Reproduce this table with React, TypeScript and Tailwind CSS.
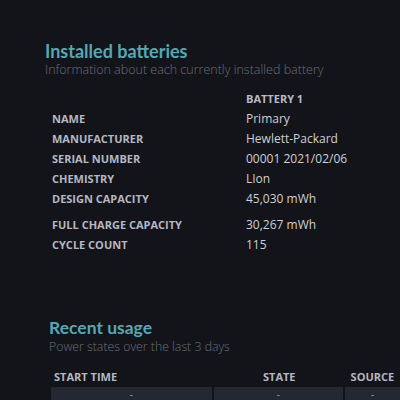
import React from "react";

const rows: [string, string, string][] = [
  ["NAME", "Primary", "h-[20px]"],
  ["MANUFACTURER", "Hewlett-Packard", "h-[20px]"],
  ["SERIAL NUMBER", "00001 2021/02/06", "h-[20px]"],
  ["CHEMISTRY", "LIon", "h-[20px]"],
  ["DESIGN CAPACITY", "45,030 mWh", "h-[26px]"],
  ["FULL CHARGE CAPACITY", "30,267 mWh", "h-[20px]"],
  ["CYCLE COUNT", "115", "h-[20px]"],
];

const titleFont = { fontFamily: '"Lato", "Open Sans", sans-serif' };

export default function App() {
  return (
    <div
      className="w-[400px] h-[400px] overflow-hidden bg-[#121419] relative"
      style={{ fontFamily: '"Open Sans", "Noto Sans", sans-serif' }}
    >
      <div className="pl-[45px] pt-[40px]">
        <div className="text-[18px] leading-[22px] font-bold text-[#55a8b4]" style={titleFont}>
          Installed batteries
        </div>
        <div className="text-[12.5px] leading-[16px] font-light text-[#6b6f7a]">
          Information about each currently installed battery
        </div>
      </div>
      <div className="pl-[52px] pt-[12px]">
        <div className="flex h-[19px] items-center">
          <div className="w-[194px]" />
          <div className="text-[11px] font-bold text-[#b8bbc4]">BATTERY 1</div>
        </div>
        {rows.map(([k, v, h]) => (
          <div key={k} className={`flex ${h} items-start`}>
            <div className="w-[194px] h-[20px] flex items-center text-[11px] font-bold text-[#b5b8c2]">
              {k}
            </div>
            <div className="h-[20px] flex items-center text-[12px] text-[#ced0d6]">{v}</div>
          </div>
        ))}
      </div>
      <div className="pl-[49px] pt-[62px]">
        <div className="text-[17.5px] leading-[22px] font-bold text-[#55a8b4]" style={titleFont}>
          Recent usage
        </div>
        <div className="text-[12.3px] leading-[16px] font-light text-[#6b6f7a]">
          Power states over the last 3 days
        </div>
      </div>
      <div className="pl-[51px] pt-[13px]">
        <div className="flex h-[19px] items-center text-[11px] font-bold text-[#b5b8c2]">
          <div className="w-[165px] pl-[3px]">START TIME</div>
          <div className="w-[133px] text-center">STATE</div>
          <div className="w-[56px] text-center">SOURCE</div>
        </div>
        <div className="flex gap-[2px] text-[11px] leading-[13px] text-[#9a9da6]">
          <div className="w-[163px] h-[13px] bg-[#242833] text-center">-</div>
          <div className="w-[131px] h-[13px] bg-[#242833] text-center">-</div>
          <div className="w-[56px] h-[13px] bg-[#242833] text-center">-</div>
        </div>
      </div>
    </div>
  );
}
